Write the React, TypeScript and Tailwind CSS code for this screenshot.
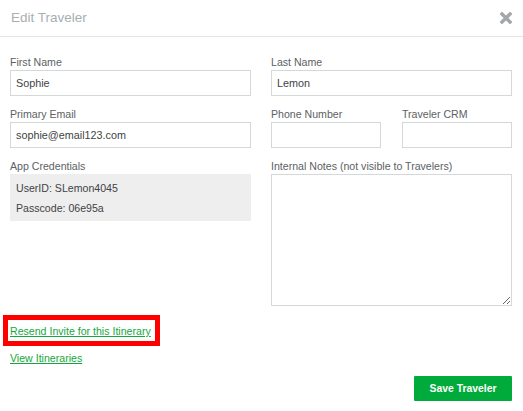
import React from "react"

const font = "font-['Liberation_Sans',Arial,sans-serif]"

function Label({ children }: { children: React.ReactNode }) {
  return <div className="h-[16px] text-[10.6px] leading-[16px] text-[#5c6163] whitespace-nowrap">{children}</div>
}

function TextInput({ value = "" }: { value?: string }) {
  return (
    <input
      type="text"
      defaultValue={value}
      className="block w-full h-[26px] border border-[#d3d8d9] bg-white px-[5px] text-[10.8px] text-[#3f4345] outline-none"
    />
  )
}

function CloseIcon() {
  return (
    <svg width="12" height="12" viewBox="0 0 12 12" className="block">
      <path d="M2 2 L10 10 M10 2 L2 10" stroke="#a3a7a9" strokeWidth="3.4" strokeLinecap="square" />
    </svg>
  )
}

export default function App() {
  return (
    <div className={`${font} w-[523px] h-[411px] bg-white overflow-hidden`}>
      {/* header */}
      <div className="h-[37px] border-b border-[#e3e6e7] flex items-center justify-between pl-[11px] pr-[11px]">
        <span className="text-[13.5px] text-[#a7afb2]">Edit Traveler</span>
        <CloseIcon />
      </div>

      {/* form */}
      <div className="pt-[17px] pl-[10px] pr-[11px] grid grid-cols-2 gap-x-[20px]">
        <div>
          <div className="mb-[10px]">
            <Label>First Name</Label>
            <TextInput value="Sophie" />
          </div>
          <div className="mb-[10px]">
            <Label>Primary Email</Label>
            <TextInput value="sophie@email123.com" />
          </div>
          <div>
            <Label>App Credentials</Label>
            <div className="h-[47px] bg-[#eeeeee] pt-[4px] pl-[6px] text-[10.6px] leading-[20px] text-[#3f4345]">
              <div>UserID: SLemon4045</div>
              <div>Passcode: 06e95a</div>
            </div>
          </div>
        </div>

        <div>
          <div className="mb-[10px]">
            <Label>Last Name</Label>
            <TextInput value="Lemon" />
          </div>
          <div className="mb-[10px] flex justify-between">
            <div className="w-[110px]">
              <Label>Phone Number</Label>
              <TextInput />
            </div>
            <div className="w-[110px]">
              <Label>Traveler CRM</Label>
              <TextInput />
            </div>
          </div>
          <div>
            <Label>Internal Notes (not visible to Travelers)</Label>
            <textarea className="block w-full h-[132px] border border-[#d3d8d9] bg-white p-[5px] text-[10.8px] outline-none" />
          </div>
        </div>
      </div>

      {/* links */}
      <div className="pt-[9px] pl-[3px] pr-[11px] flex flex-col">
        <div className="w-fit h-[31px] border-[5px] border-[#ff0000] pl-[2px] pr-[4px] pt-[2px]">
          <a href="#" className="block text-[10.6px] leading-[19px] text-[#13a83e] underline">
            Resend Invite for this Itinerary
          </a>
        </div>
        <div className="mt-[4px] pl-[7px] h-[16px]">
          <a href="#" className="block text-[10.6px] leading-[16px] text-[#13a83e] underline">
            View Itineraries
          </a>
        </div>
        <div className="mt-[10px] flex justify-end">
          <button
            type="button"
            className="w-[98px] h-[25px] bg-[#01ab3b] text-white text-[10.4px] font-bold rounded-[1px]"
          >
            Save Traveler
          </button>
        </div>
      </div>
    </div>
  )
}
